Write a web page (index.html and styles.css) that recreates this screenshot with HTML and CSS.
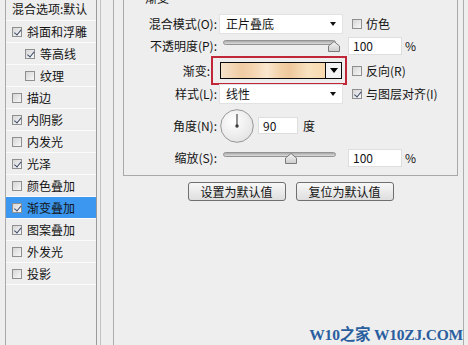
FILE: index.html
```html
<!DOCTYPE html>
<html lang="zh-CN">
  <head>
    <meta charset="UTF-8" />
    <meta name="viewport" content="width=device-width, initial-scale=1.0" />
    <title>图层样式 - 渐变叠加</title>
    <link rel="stylesheet" href="styles.css">
  </head>
  <body>
    <div class="dialog">
      <aside class="sidebar">
        <ul class="style-list">
          <li class="head">混合选项:默认</li>
          <li><span class="cb on"></span>斜面和浮雕</li>
          <li class="sub"><span class="cb on"></span>等高线</li>
          <li class="sub"><span class="cb"></span>纹理</li>
          <li><span class="cb"></span>描边</li>
          <li><span class="cb on"></span>内阴影</li>
          <li><span class="cb"></span>内发光</li>
          <li><span class="cb on"></span>光泽</li>
          <li><span class="cb"></span>颜色叠加</li>
          <li class="active"><span class="cb on"></span>渐变叠加</li>
          <li><span class="cb on"></span>图案叠加</li>
          <li><span class="cb"></span>外发光</li>
          <li><span class="cb"></span>投影</li>
        </ul>
      </aside>

      <main class="pane">
        <section class="group">
          <div class="legend">渐变</div>
          <div class="form">
            <!-- 混合模式 -->
            <label class="lbl">混合模式(O):</label>
            <div class="select">正片叠底<span class="arrow"></span></div>
            <div class="extra"><span class="cb"></span>仿色</div>

            <!-- 不透明度 -->
            <label class="lbl">不透明度(P):</label>
            <div class="slider">
              <div class="track"></div>
              <svg class="thumb" style="left: 105px" width="12" height="11" viewBox="0 0 12 11">
                <defs>
                  <linearGradient id="tg1" x1="0" y1="0" x2="0" y2="1">
                    <stop offset="0" stop-color="#f4f4f4" />
                    <stop offset="1" stop-color="#cdcdcd" />
                  </linearGradient>
                </defs>
                <polygon points="6,0.5 11.5,5 11.5,10.5 0.5,10.5 0.5,5" fill="url(#tg1)" stroke="#7b7b7b" />
              </svg>
            </div>
            <div class="extra num-wrap"><span class="num">100</span>%</div>

            <!-- 渐变 -->
            <label class="lbl lbl-grad">渐变:</label>
            <div class="grad-hl">
              <div class="grad">
                <div class="swatch"></div>
                <div class="drop"><span class="tri"></span></div>
              </div>
            </div>
            <div class="extra"><span class="cb"></span>反向(R)</div>

            <!-- 样式 -->
            <label class="lbl">样式(L):</label>
            <div class="select">线性<span class="arrow"></span></div>
            <div class="extra"><span class="cb on"></span>与图层对齐(I)</div>

            <!-- 角度 -->
            <label class="lbl">角度(N):</label>
            <div class="angle">
              <svg class="dial" width="34" height="34" viewBox="0 0 34 34">
                <defs>
                  <radialGradient id="dg" cx="40%" cy="35%" r="70%">
                    <stop offset="0" stop-color="#ffffff" />
                    <stop offset="1" stop-color="#e3e3e3" />
                  </radialGradient>
                </defs>
                <circle cx="17" cy="17" r="16.3" fill="url(#dg)" stroke="#8c8c8c" stroke-width="0.9" />
                <line x1="17" y1="17" x2="17" y2="5" stroke="#3a3a3a" stroke-width="1.1" />
                <circle cx="17" cy="17" r="1.7" fill="#3a3a3a" />
              </svg>
              <span class="num num-angle">90</span>
              <span>度</span>
            </div>
            <div class="extra"></div>

            <!-- 缩放 -->
            <label class="lbl">缩放(S):</label>
            <div class="slider">
              <div class="track"></div>
              <svg class="thumb" style="left: 62px" width="12" height="11" viewBox="0 0 12 11">
                <defs>
                  <linearGradient id="tg2" x1="0" y1="0" x2="0" y2="1">
                    <stop offset="0" stop-color="#f4f4f4" />
                    <stop offset="1" stop-color="#cdcdcd" />
                  </linearGradient>
                </defs>
                <polygon points="6,0.5 11.5,5 11.5,10.5 0.5,10.5 0.5,5" fill="url(#tg2)" stroke="#7b7b7b" />
              </svg>
            </div>
            <div class="extra num-wrap"><span class="num">100</span>%</div>
          </div>
        </section>

        <div class="buttons">
          <button class="btn">设置为默认值</button>
          <button class="btn">复位为默认值</button>
        </div>
      </main>

      <div class="watermark">W10之家 W10ZJ.COM</div>
    </div>
  </body>
</html>
```

FILE: styles.css
```css
body {
  margin: 0;
  width: 468px;
  height: 345px;
  overflow: hidden;
  background-color: #eeeeee;
  font-family: "Noto Sans CJK SC", "Liberation Sans", sans-serif;
  font-size: 12px;
  color: #141414;
}
.dialog {
  position: relative;
  display: flex;
  height: 345px;
}

/* left list */
.sidebar {
  width: 100px;
  border-right: 1px solid #c2c2c2;
  flex: none;
}
.style-list {
  list-style: none;
  margin: 0 0 0 5px;
  padding: 0;
  width: 90px;
  height: 345px;
  border-left: 1px solid #a9a9a9;
  border-right: 1px solid #9a9a9a;
}
.style-list li {
  display: flex;
  align-items: center;
  gap: 5px;
  height: 21px;
  padding-left: 6px;
  border-bottom: 1px solid #fbfbfb;
  line-height: 16px;
  white-space: nowrap;
}
.style-list li.head {
  height: 20px;
  align-items: flex-start;
  line-height: 17px;
}
.style-list li.sub {
  padding-left: 19px;
}
.style-list li.active {
  background-color: #3b97ef;
}

/* checkbox */
.cb {
  position: relative;
  display: inline-block;
  flex: none;
  width: 10px;
  height: 10px;
  box-sizing: border-box;
  border: 1px solid #8f8f8f;
  background: linear-gradient(135deg, #d6d6d6, #f7f7f7);
}
.cb.on::after {
  content: "";
  position: absolute;
  left: 2.5px;
  top: 0px;
  width: 2.5px;
  height: 5.5px;
  border: solid #3e4c6c;
  border-width: 0 1.5px 1.5px 0;
  transform: rotate(40deg);
}

/* right pane */
.pane {
  flex: none;
  width: 349px;
  margin-left: 12px;
  border-left: 1px solid #adadad;
  border-right: 1px solid #adadad;
}
.group {
  margin: -10px 5px 0 9px;
  border: 1px solid #a9a9a9;
}
.legend {
  margin-left: 21px;
  height: 14px;
  line-height: 14px;
}
.form {
  display: grid;
  grid-template-columns: 95px 129px 1fr;
  grid-template-rows: 23px 21px 29px 18px 45px 19px;
  align-items: center;
  margin-top: 7px;
  padding-bottom: 8px;
}
.lbl {
  text-align: right;
  padding-right: 2px;
  line-height: 16px;
  white-space: nowrap;
}
.lbl-grad {
  padding-right: 9px;
}
.extra {
  display: flex;
  align-items: center;
  gap: 4px;
  padding-left: 4px;
  line-height: 16px;
  white-space: nowrap;
}
.num-wrap {
  padding-left: 0;
  gap: 3px;
}

.select {
  display: flex;
  justify-content: space-between;
  align-items: center;
  width: 124px;
  height: 20px;
  box-sizing: border-box;
  padding: 0 6px 0 6px;
  background-color: #ffffff;
  border: 1px solid #e2e2e2;
  line-height: 16px;
}
.arrow {
  width: 0;
  height: 0;
  border-left: 3.5px solid transparent;
  border-right: 3.5px solid transparent;
  border-top: 4px solid #111;
}

.num {
  display: inline-block;
  width: 54px;
  height: 18px;
  box-sizing: border-box;
  padding-left: 4px;
  background-color: #ffffff;
  border: 1px solid #dedede;
  line-height: 16px;
}
.num-angle {
  width: 40px;
  height: 17px;
  margin-right: 1px;
}

/* slider */
.slider {
  position: relative;
  height: 16px;
  width: 113px;
  margin-left: 4px;
}
.track {
  margin-top: 2px;
  height: 5px;
  box-sizing: border-box;
  border: 1px solid #939393;
  border-radius: 3px;
  background: linear-gradient(#a9a9a9, #dcdcdc);
}
.thumb {
  position: absolute;
  top: 3px;
}

/* gradient picker */
.grad-hl {
  margin-left: -8px;
  width: 136px;
  height: 29px;
  box-sizing: border-box;
  border: 2px solid #c0283a;
  padding: 4px 3px 4px 7px;
}
.grad {
  display: flex;
  height: 17px;
  box-sizing: border-box;
  border: 1px solid #0a0a0a;
}
.swatch {
  flex: 1;
  background: linear-gradient(to right, #f7e3ca 0%, #f0cca3 20%, #f4d6b2 32%, #fae7cf 44%, #f2d0a6 58%, #efc89c 66%, #f9e2c0 84%, #f7d9ae 100%);
}
.drop {
  display: flex;
  align-items: center;
  justify-content: center;
  width: 15px;
  border-left: 1px solid #0a0a0a;
  background-color: #f3f3f3;
}
.tri {
  width: 0;
  height: 0;
  border-left: 4.5px solid transparent;
  border-right: 4.5px solid transparent;
  border-top: 5px solid #000;
}

/* angle */
.angle {
  display: flex;
  align-items: center;
  gap: 4px;
  margin-left: 1px;
  line-height: 16px;
}

/* buttons */
.buttons {
  display: flex;
  justify-content: center;
  gap: 10px;
  margin: 6px 5px 0 9px;
}
.btn {
  width: 98px;
  height: 19px;
  padding: 0;
  font-family: inherit;
  font-size: 12px;
  line-height: 15px;
  color: #141414;
  border: 1px solid #6f6f6f;
  border-radius: 3px;
  background: linear-gradient(#f8f8f8, #dedede);
}

.watermark {
  position: absolute;
  right: 5px;
  bottom: 2px;
  font-family: "Liberation Serif", "Noto Sans CJK SC", serif;
  font-weight: bold;
  font-size: 15.5px;
  line-height: 17px;
  letter-spacing: -0.2px;
  color: #2a5e9f;
}
```
